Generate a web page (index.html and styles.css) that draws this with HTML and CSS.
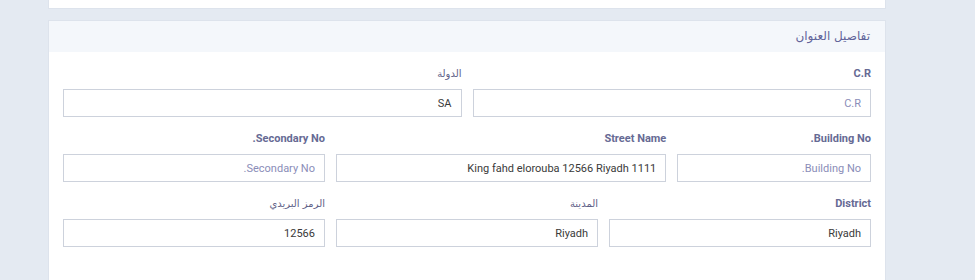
FILE: index.html
```html
<!DOCTYPE html>
<html lang="ar" dir="rtl">
<head>
<meta charset="UTF-8">
<meta name="viewport" content="width=device-width, initial-scale=1.0">
<title>تفاصيل العنوان</title>
<link rel="stylesheet" href="styles.css">
</head>
<body>
<div class="page">
    <div class="card card-top"></div>

    <div class="card">
        <div class="card-header">تفاصيل العنوان</div>
        <form class="card-body form-grid">
            <div class="field span-6">
                <label for="cr">C.R</label>
                <input type="text" id="cr" placeholder="C.R">
            </div>
            <div class="field span-6">
                <label for="country" class="ar">الدولة</label>
                <input type="text" id="country" value="SA">
            </div>

            <div class="field span-3">
                <label for="building">Building No.</label>
                <input type="text" id="building" placeholder="Building No.">
            </div>
            <div class="field span-5">
                <label for="street">Street Name</label>
                <input type="text" id="street" value="King fahd elorouba 12566 Riyadh 1111">
            </div>
            <div class="field span-4">
                <label for="secondary">Secondary No.</label>
                <input type="text" id="secondary" placeholder="Secondary No.">
            </div>

            <div class="field span-4">
                <label for="district">District</label>
                <input type="text" id="district" value="Riyadh">
            </div>
            <div class="field span-4">
                <label for="city" class="ar">المدينة</label>
                <input type="text" id="city" value="Riyadh">
            </div>
            <div class="field span-4">
                <label for="postal" class="ar">الرمز البريدي</label>
                <input type="text" id="postal" value="12566">
            </div>
        </form>
    </div>
</div>
</body>
</html>
```

FILE: styles.css
```css
body {
    margin: 0;
    padding: 0;
    background-color: #e4eaf2;
    font-family: Roboto, "Noto Sans", sans-serif;
}
.page {
    width: 838px;
    margin-left: 48px;
    margin-right: auto; /* rtl: keep the page on the left */
}
.card {
    background-color: #fff;
    border: 1px solid #dde3ec;
    box-sizing: border-box;
}
.card-top {
    height: 9px;
    border-top: none;
    margin-bottom: 11px;
}
.card-header {
    height: 31px;
    line-height: 31px;
    padding: 0 15px;
    background-color: #f4f7fb;
    color: #62649a;
    font-family: "DejaVu Sans", sans-serif;
    font-size: 12px;
    font-weight: 500;
}
.card-body {
    padding: 14px 14px 60px 14px;
}
.form-grid {
    display: grid;
    grid-template-columns: repeat(12, 1fr);
    column-gap: 11px;
    row-gap: 14px;
}
.span-3 { grid-column: span 3; }
.span-4 { grid-column: span 4; }
.span-5 { grid-column: span 5; }
.span-6 { grid-column: span 6; }

.field label {
    display: block;
    height: 16px;
    line-height: 16px;
    margin-bottom: 7px;
    font-size: 11px;
    font-weight: bold;
    color: #666a94;
}
.field label.ar {
    font-weight: normal;
    font-family: "DejaVu Sans", sans-serif;
    font-size: 10px;
    color: #5f6288;
}
.field input {
    display: block;
    width: 100%;
    height: 28px;
    padding: 0 9px;
    border: 1px solid #cdd2dc;
    border-radius: 0;
    box-sizing: border-box;
    font-family: Roboto, sans-serif;
    font-size: 11px;
    color: #3a3a3a;
    background-color: #fff;
    outline: none;
}
.field input::placeholder {
    color: #8a8db8;
}
```
